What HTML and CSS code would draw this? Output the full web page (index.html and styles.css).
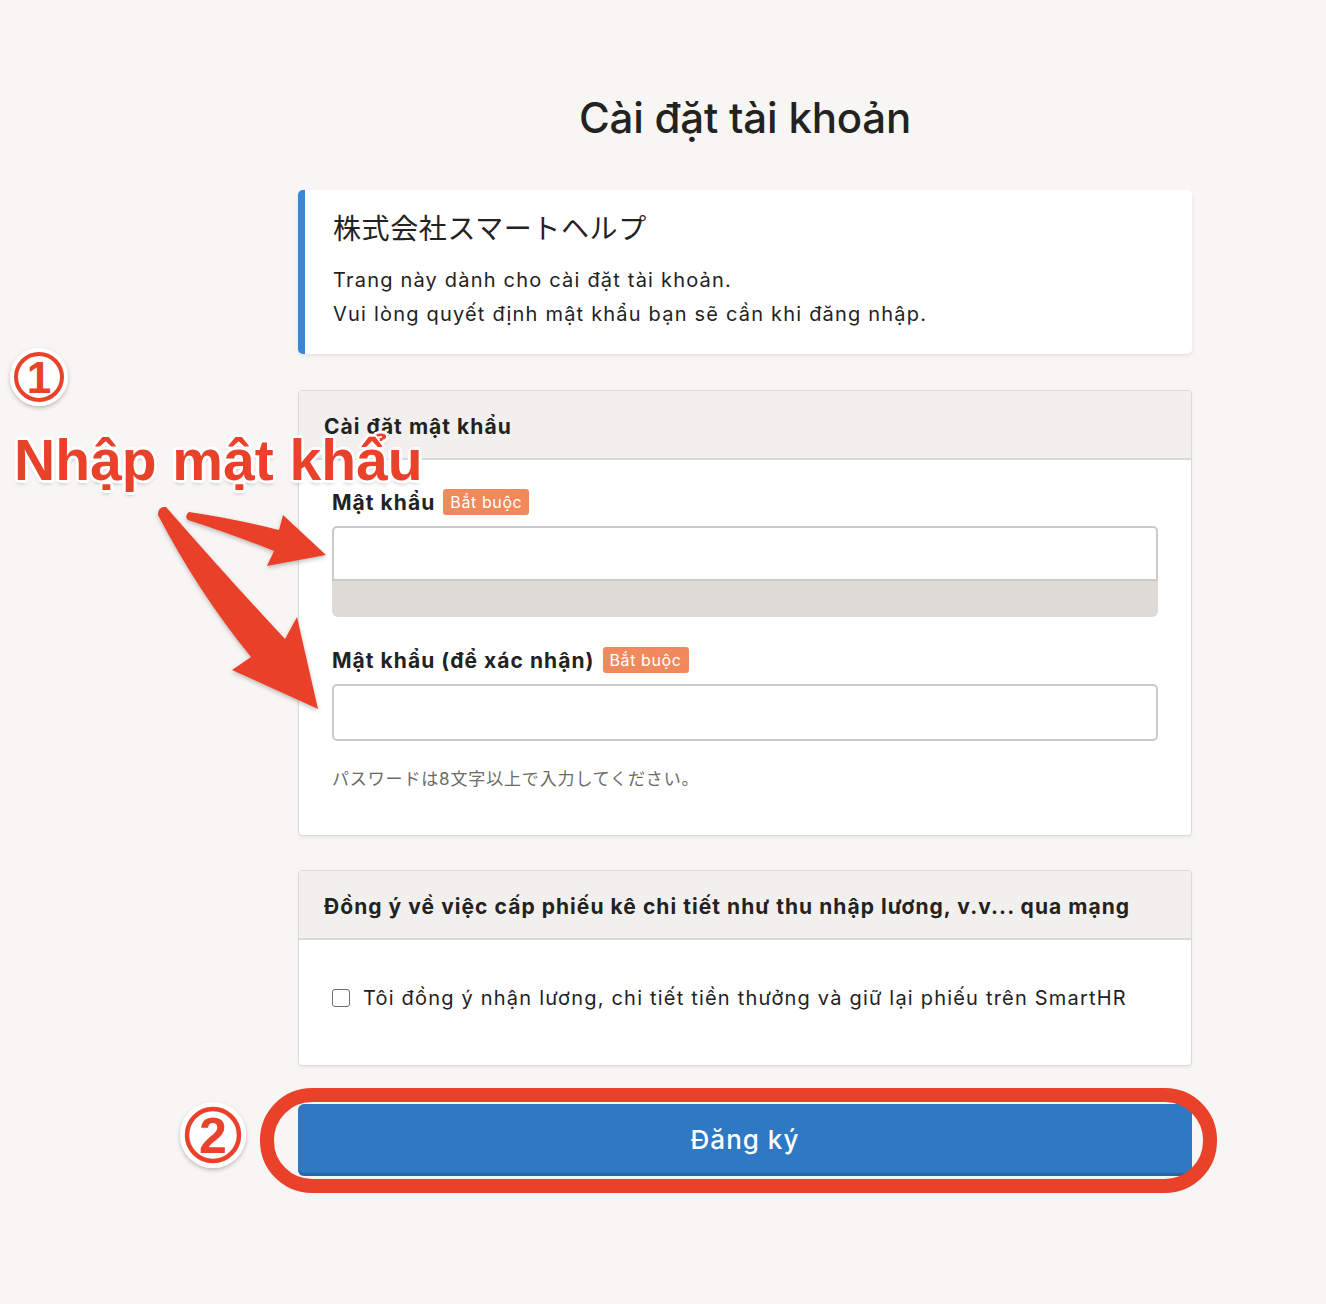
FILE: index.html
```html
<!DOCTYPE html>
<html lang="vi">
<head>
<meta charset="utf-8">
<title>Cài đặt tài khoản</title>
<link rel="stylesheet" href="styles.css">
</head>
<body>
<div class="page">
  <main class="column">
    <h1 class="title">Cài đặt tài khoản</h1>

    <section class="info">
      <div class="company">株式会社スマートヘルプ</div>
      <p class="info-text">Trang này dành cho cài đặt tài khoản.<br>Vui lòng quyết định mật khẩu bạn sẽ cần khi đăng nhập.</p>
    </section>

    <section class="card card-pw">
      <header class="card-head">Cài đặt mật khẩu</header>
      <div class="card-body pw-body">
        <div class="field">
          <div class="label-row"><span class="label">Mật khẩu</span><span class="badge">Bắt buộc</span></div>
          <div class="meter-wrap">
            <input class="input input-top" type="password">
          </div>
        </div>
        <div class="field field2">
          <div class="label-row"><span class="label">Mật khẩu (để xác nhận)</span><span class="badge">Bắt buộc</span></div>
          <input class="input input-full" type="password">
        </div>
        <p class="hint">パスワードは8文字以上で入力してください。</p>
      </div>
    </section>

    <section class="card card-agree">
      <header class="card-head">Đồng ý về việc cấp phiếu kê chi tiết như thu nhập lương, v.v... qua mạng</header>
      <div class="card-body agree-body">
        <label class="check-row"><input type="checkbox" class="check"><span>Tôi đồng ý nhận lương, chi tiết tiền thưởng và giữ lại phiếu trên SmartHR</span></label>
      </div>
    </section>

    <button class="submit" type="button">Đăng ký</button>
  </main>

  <svg class="overlay" width="1326" height="1304" viewBox="0 0 1326 1304" xmlns="http://www.w3.org/2000/svg">
    <defs>
      <filter id="sh" x="-20%" y="-20%" width="140%" height="140%">
        <feDropShadow dx="0" dy="2" stdDeviation="2" flood-color="#000" flood-opacity="0.25"/>
      </filter>
    </defs>
    <!-- badge 1 -->
    <g filter="url(#sh)">
      <circle cx="39" cy="377" r="29" fill="#fff"/>
    </g>
    <circle cx="39" cy="377" r="23" fill="none" stroke="#e9412a" stroke-width="4"/>
    <text x="39" y="393" text-anchor="middle" class="num">1</text>

    <!-- badge 2 -->
    <g filter="url(#sh)">
      <circle cx="213" cy="1135" r="33" fill="#fff"/>
    </g>
    <circle cx="213" cy="1135" r="26" fill="none" stroke="#e9412a" stroke-width="4.5"/>
    <text x="213" y="1153" text-anchor="middle" class="num num2">2</text>

    <!-- arrows -->
    <g filter="url(#sh)" fill="#e9412a">
      <path d="M189,512 Q236,519 279,530 L283,515 L326,555 L267,566 L274,551 Q234,535 188,520 Q184,516 189,512 Z"/>
      <path d="M166,507 Q228,578 285,639 L297,617 L318,709 L232,670 L251,657 Q198,592 158,515 Q158,506 166,507 Z"/>
    </g>

    <!-- highlight frame -->
    <rect x="267" y="1095" width="943" height="91" rx="45" ry="45" fill="none" stroke="#e9412a" stroke-width="14"/>
  </svg>

  <div class="callout">Nhập mật khẩu</div>
</div>
</body>
</html>
```

FILE: styles.css
```css
* { box-sizing: border-box; }

html, body {
  margin: 0;
  padding: 0;
  background: #f7f6f4;
}

body {
  font-family: "Inter", "Noto Sans CJK JP", sans-serif;
  color: #23221f;
}

.page {
  position: relative;
  width: 1326px;
  min-height: 1304px;
}

.column {
  width: 894px;
  margin-left: 298px;
  padding-top: 90px;
  display: flex;
  flex-direction: column;
}

.title {
  margin: 0 0 44px;
  font-size: 42px;
  line-height: 56px;
  font-weight: 500;
  text-align: center;
  color: #23221f;
  letter-spacing: -0.2px;
}

.info {
  background: #fff;
  border-left: 7px solid #3a86d4;
  border-radius: 5px;
  box-shadow: 0 2px 4px rgba(0,0,0,0.08);
  padding: 21px 30px 23px 28px;
  margin-bottom: 36px;
}

.company {
  font-size: 28px;
  line-height: 36px;
  letter-spacing: 0.6px;
  color: #23221f;
}

.info-text {
  margin: 16px 0 0;
  font-size: 20px;
  line-height: 34px;
  letter-spacing: 1.2px;
  color: #23221f;
}

.card {
  background: #fff;
  border: 1px solid #dcdad6;
  border-radius: 4px;
  box-shadow: 0 2px 3px rgba(0,0,0,0.05);
  overflow: hidden;
}

.card-pw {
  margin-bottom: 34px;
}

.card-agree {
  margin-bottom: 35px;
}

.card-head {
  background: #f1f0ee;
  border-bottom: 2px solid #dcdad6;
  height: 69px;
  display: flex;
  align-items: center;
  padding: 4px 25px 0;
  font-size: 21px;
  font-weight: 700;
  letter-spacing: 1.05px;
  color: #23221f;
}

.card-body {
  padding: 0 33px;
}

.pw-body {
  padding-top: 28px;
  padding-bottom: 44px;
}

.label-row {
  display: flex;
  align-items: center;
  gap: 8px;
  height: 28px;
}

.label {
  font-size: 21px;
  font-weight: 700;
  letter-spacing: 1.05px;
  color: #23221f;
}

.badge {
  background: #f08a5c;
  color: #fff;
  font-size: 16px;
  line-height: 27px;
  height: 26px;
  padding: 0 7px;
  border-radius: 3px;
  font-weight: 400;
  letter-spacing: 0.6px;
}

.meter-wrap {
  margin-top: 10px;
  background: #dedbd6;
  border-radius: 6px;
  height: 91px;
  display: flex;
  flex-direction: column;
}

.input {
  display: block;
  width: 100%;
  background: #fff;
  border: 2px solid #cccac6;
  font-size: 18px;
  outline: none;
  margin: 0;
}

.input-top {
  height: 55px;
  border-radius: 5px 5px 0 0;
}

.field2 {
  margin-top: 29px;
}

.input-full {
  margin-top: 10px;
  height: 57px;
  border-radius: 5px;
}

.hint {
  margin: 26px 0 0;
  font-size: 17px;
  line-height: 24px;
  letter-spacing: 0.85px;
  color: #6c6a66;
}

.agree-body {
  padding-top: 44px;
  padding-bottom: 53px;
}

.check-row {
  display: flex;
  align-items: center;
  gap: 13px;
  height: 28px;
  font-size: 20px;
  letter-spacing: 1.2px;
  color: #23221f;
}

.check {
  appearance: none;
  -webkit-appearance: none;
  width: 18px;
  height: 18px;
  margin: 0;
  border: 1.5px solid #6f6d69;
  border-radius: 3px;
  background: #fff;
  flex: none;
}

.submit {
  display: block;
  width: 894px;
  height: 72px;
  margin-top: 3px;
  border: none;
  border-radius: 6px;
  background: #2f78c4;
  box-shadow: inset 0 -3px 0 rgba(0,0,0,0.15);
  color: #fff;
  font-family: "Inter", sans-serif;
  font-size: 26px;
  font-weight: 500;
  letter-spacing: 1px;
  padding-bottom: 2px;
  cursor: pointer;
}

.overlay {
  position: absolute;
  left: 0;
  top: 0;
  pointer-events: none;
}

.num {
  font-family: "Liberation Sans", Arial, sans-serif;
  font-weight: 700;
  font-size: 44px;
  fill: #e9412a;
}

.num2 {
  font-size: 50px;
}

.callout {
  position: absolute;
  left: 14px;
  top: 425px;
  font-family: "Liberation Sans", Arial, sans-serif;
  font-weight: 700;
  font-size: 57px;
  line-height: 70px;
  color: #e9412a;
  white-space: nowrap;
  text-shadow:
    2px 0 0 #fff, -2px 0 0 #fff, 0 2px 0 #fff, 0 -2px 0 #fff,
    2px 2px 0 #fff, -2px -2px 0 #fff, 2px -2px 0 #fff, -2px 2px 0 #fff,
    3px 1px 0 #fff, -3px 1px 0 #fff, 1px 3px 0 #fff, 1px -3px 0 #fff,
    0 3px 4px rgba(0,0,0,0.3);
}
```
